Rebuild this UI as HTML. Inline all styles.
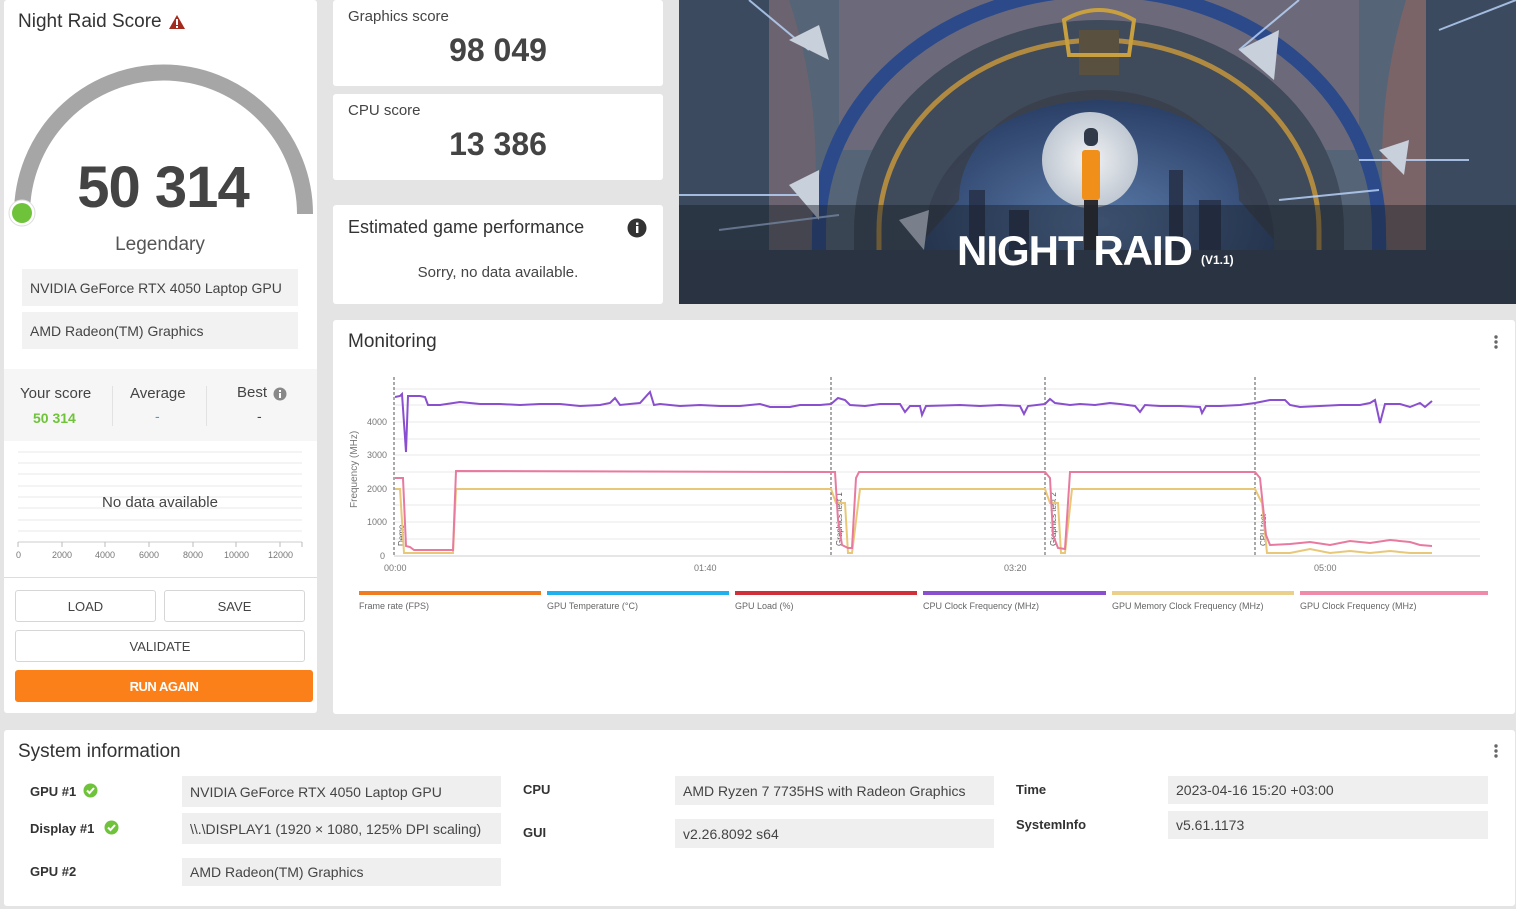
<!DOCTYPE html>
<html><head><meta charset="utf-8"><style>
*{margin:0;padding:0;box-sizing:border-box}
body{width:1516px;height:909px;background:#e4e4e4;font-family:"Liberation Sans",sans-serif;color:#3a3a3a;position:relative;overflow:hidden}
.card{position:absolute;background:#fff;border-radius:3px}
.abs{position:absolute}
.box{position:absolute;background:#f2f2f2;font-size:14px;color:#444;padding-left:8px;display:flex;align-items:center}
.btn{position:absolute;border:1px solid #d6d6d6;border-radius:3px;background:#fff;font-size:13px;color:#444;display:flex;align-items:center;justify-content:center}
.lbl{position:absolute;font-size:13px;font-weight:bold;color:#333}
.sv{position:absolute;background:#efefef;font-size:14px;color:#444;padding-left:8px;display:flex;align-items:center}
</style></head><body>

<!-- left card -->
<div class="card" style="left:4px;top:0;width:313px;height:713px"></div>
<div class="abs" style="left:18px;top:11px;font-size:19px;color:#333">Night Raid Score</div>
<svg class="abs" style="left:168px;top:14px" width="18" height="16"><path d="M9 1 L17 15 L1 15 Z" fill="#a52a1e"/><rect x="8" y="5" width="2" height="6" fill="#fff"/><rect x="8" y="12" width="2" height="2" fill="#fff"/></svg>
<svg class="abs" style="left:0;top:0" width="330" height="240">
<path d="M22 214 A141 141 0 0 1 305 214" fill="none" stroke="#a6a6a6" stroke-width="16"/>
<circle cx="22" cy="213" r="13" fill="#fff" stroke="#ddd"/>
<circle cx="22" cy="213" r="10" fill="#6fc33a"/>
</svg>
<div class="abs" style="left:0;width:326px;top:154px;text-align:center;font-size:58px;font-weight:bold;color:#444;letter-spacing:-1px">50 314</div>
<div class="abs" style="left:0;width:320px;top:234px;text-align:center;font-size:19px;color:#555">Legendary</div>
<div class="box" style="left:22px;top:269px;width:276px;height:37px">NVIDIA GeForce RTX 4050 Laptop GPU</div>
<div class="box" style="left:22px;top:312px;width:276px;height:37px">AMD Radeon(TM) Graphics</div>
<div class="abs" style="left:4px;top:369px;width:313px;height:72px;background:#f6f6f6"></div>
<div class="abs" style="left:20px;top:385px;font-size:15px;color:#444">Your score</div>
<div class="abs" style="left:33px;top:410px;font-size:14px;font-weight:bold;color:#6fc33a">50 314</div>
<div class="abs" style="left:112px;top:386px;width:1px;height:40px;background:#e2e2e2"></div>
<div class="abs" style="left:130px;top:385px;font-size:15px;color:#444">Average</div>
<div class="abs" style="left:155px;top:408px;font-size:14px;color:#29a8e0">-</div>
<div class="abs" style="left:206px;top:386px;width:1px;height:40px;background:#e2e2e2"></div>
<div class="abs" style="left:237px;top:384px;font-size:15px;color:#444">Best</div>
<svg class="abs" style="left:273px;top:387px" width="14" height="14"><circle cx="7" cy="7" r="6.5" fill="#888"/><rect x="6" y="6" width="2" height="5" fill="#fff"/><rect x="6" y="3" width="2" height="2" fill="#fff"/></svg>
<div class="abs" style="left:257px;top:408px;font-size:14px;color:#444">-</div>
<svg class="abs" style="left:0;top:440px" width="320" height="130" font-family="Liberation Sans" font-size="9" fill="#777">
<g stroke="#eaeaea"><line x1="18" y1="12" x2="302" y2="12"/><line x1="18" y1="23" x2="302" y2="23"/><line x1="18" y1="34" x2="302" y2="34"/><line x1="18" y1="46" x2="302" y2="46"/><line x1="18" y1="57" x2="302" y2="57"/><line x1="18" y1="68" x2="302" y2="68"/><line x1="18" y1="80" x2="302" y2="80"/><line x1="18" y1="91" x2="302" y2="91"/></g>
<line x1="18" y1="102" x2="302" y2="102" stroke="#ccc"/>
<g stroke="#bbb"><line x1="18" y1="102" x2="18" y2="107"/><line x1="62" y1="102" x2="62" y2="107"/><line x1="105" y1="102" x2="105" y2="107"/><line x1="149" y1="102" x2="149" y2="107"/><line x1="193" y1="102" x2="193" y2="107"/><line x1="236" y1="102" x2="236" y2="107"/><line x1="280" y1="102" x2="280" y2="107"/><line x1="302" y1="102" x2="302" y2="107"/></g>
<text x="16" y="118">0</text><text x="52" y="118">2000</text><text x="95" y="118">4000</text><text x="139" y="118">6000</text><text x="183" y="118">8000</text><text x="224" y="118">10000</text><text x="268" y="118">12000</text>
</svg>
<div class="abs" style="left:0;width:320px;top:494px;text-align:center;font-size:15px;color:#444">No data available</div>
<div class="abs" style="left:4px;top:577px;width:313px;height:1px;background:#ddd"></div>
<div class="btn" style="left:15px;top:590px;width:141px;height:32px">LOAD</div>
<div class="btn" style="left:164px;top:590px;width:141px;height:32px">SAVE</div>
<div class="btn" style="left:15px;top:630px;width:290px;height:32px">VALIDATE</div>
<div class="btn" style="left:15px;top:670px;width:298px;height:32px;background:#fb8019;border-color:#fb8019;color:#fff;font-weight:bold;letter-spacing:-0.5px">RUN AGAIN</div>

<!-- score cards -->
<div class="card" style="left:333px;top:0;width:330px;height:86px"></div>
<div class="abs" style="left:348px;top:8px;font-size:15px;color:#444">Graphics score</div>
<div class="abs" style="left:333px;width:330px;top:32px;text-align:center;font-size:32px;font-weight:bold;color:#444">98 049</div>
<div class="card" style="left:333px;top:94px;width:330px;height:86px"></div>
<div class="abs" style="left:348px;top:102px;font-size:15px;color:#444">CPU score</div>
<div class="abs" style="left:333px;width:330px;top:126px;text-align:center;font-size:32px;font-weight:bold;color:#444">13 386</div>
<div class="card" style="left:333px;top:205px;width:330px;height:99px"></div>
<div class="abs" style="left:348px;top:217px;font-size:18px;color:#333">Estimated game performance</div>
<svg class="abs" style="left:627px;top:218px" width="20" height="20"><circle cx="10" cy="10" r="9.5" fill="#333"/><rect x="9" y="8" width="2.4" height="7" fill="#fff"/><rect x="9" y="4.5" width="2.4" height="2.4" fill="#fff"/></svg>
<div class="abs" style="left:333px;width:330px;top:264px;text-align:center;font-size:15px;color:#444">Sorry, no data available.</div>

<!-- banner -->
<div class="abs" style="left:679px;top:0;width:837px;height:304px;overflow:hidden;background:#4a5a70">
<svg width="837" height="304" style="position:absolute;left:0;top:0">
 <defs>
  <radialGradient id="sky" cx="0.5" cy="0.6" r="0.6"><stop offset="0" stop-color="#5a7aa8"/><stop offset="1" stop-color="#2a3f66"/></radialGradient>
  <radialGradient id="moon"><stop offset="0" stop-color="#f0f2f4"/><stop offset="1" stop-color="#c0c8d2"/></radialGradient>
 </defs>
 <rect width="837" height="304" fill="#566477"/>
 <path d="M90 0 L90 304 L0 304 L0 0Z" fill="#3b4a5e"/>
 <path d="M747 0 L837 0 L837 304 L747 304Z" fill="#3b4a5e"/>
 <path d="M110 0 Q150 120 130 260 L90 260 L90 0Z" fill="#6b6470"/>
 <path d="M727 0 Q690 120 710 260 L747 260 L747 0Z" fill="#7a6468"/>
 <path d="M160 0 Q420 -40 680 0 L680 150 L160 150Z" fill="#6c6a7a"/>
 <path d="M140 304 L140 230 A280 240 0 0 1 700 230 L700 304Z" fill="none" stroke="#2c4a8a" stroke-width="14"/>
 <path d="M175 304 L175 230 A245 210 0 0 1 665 230 L665 304Z" fill="#3f4a5a"/>
 <path d="M200 304 L200 230 A220 190 0 0 1 640 230 L640 304Z" fill="none" stroke="#b08a40" stroke-width="5"/>
 <path d="M245 304 L245 240 A175 140 0 0 1 595 240 L595 304Z" fill="url(#sky)"/>
 <path d="M245 240 A175 140 0 0 1 595 240 L560 200 A140 110 0 0 0 280 200Z" fill="#3a3e48" opacity=".8"/>
 <rect x="400" y="30" width="40" height="45" fill="#5a5040"/>
 <path d="M385 20 Q420 0 455 20 L450 55 L390 55Z" fill="none" stroke="#c8a040" stroke-width="4"/>
 <circle cx="411" cy="160" r="48" fill="url(#moon)"/>
 <g fill="#2a3550"><rect x="290" y="190" width="16" height="110"/><rect x="330" y="210" width="20" height="90"/><rect x="490" y="170" width="14" height="130"/><rect x="520" y="200" width="22" height="100"/></g>
 <rect x="403" y="150" width="18" height="50" rx="3" fill="#f0901a"/>
 <rect x="405" y="128" width="14" height="18" rx="6" fill="#303a48"/>
 <rect x="405" y="200" width="14" height="70" fill="#2a2a30"/>
 <rect x="0" y="250" width="837" height="54" fill="#3a4456"/>
 <g stroke="#bcd8ff" stroke-width="2" opacity=".8"><line x1="70" y1="0" x2="130" y2="50"/><line x1="620" y1="0" x2="560" y2="50"/><line x1="0" y1="195" x2="120" y2="195"/><line x1="40" y1="230" x2="160" y2="215"/><line x1="680" y1="160" x2="790" y2="160"/><line x1="760" y1="30" x2="837" y2="0"/><line x1="600" y1="200" x2="700" y2="190"/></g>
 <g fill="#c8d0dc"><path d="M110 40 L140 25 L150 60Z"/><path d="M560 50 L600 30 L595 80Z"/><path d="M110 185 L140 170 L140 220Z"/><path d="M700 150 L730 140 L725 175Z"/><path d="M220 220 L250 210 L245 250Z"/></g>
 <rect x="0" y="205" width="837" height="99" fill="rgba(25,30,40,.45)"/>
</svg>
 <div class="abs" style="left:278px;top:227px;font-size:42px;font-weight:bold;color:#fff;letter-spacing:-1px">NIGHT RAID</div>
 <div class="abs" style="left:522px;top:253px;font-size:12px;font-weight:bold;color:#fff">(V1.1)</div>
</div>

<!-- monitoring -->
<div class="card" style="left:333px;top:320px;width:1182px;height:394px"></div>
<div class="abs" style="left:348px;top:331px;font-size:19px;color:#333">Monitoring</div>
<svg class="abs" style="left:1492px;top:334px" width="8" height="16"><circle cx="4" cy="3" r="1.7" fill="#666"/><circle cx="4" cy="8" r="1.7" fill="#666"/><circle cx="4" cy="13" r="1.7" fill="#666"/></svg>
<svg class="abs" style="left:0;top:0" width="1516" height="640" font-family="Liberation Sans" font-size="9" fill="#777">
<g stroke="#eaeaea"><line x1="394" y1="389" x2="1480" y2="389"/><line x1="394" y1="405" x2="1480" y2="405"/><line x1="394" y1="422" x2="1480" y2="422"/><line x1="394" y1="439" x2="1480" y2="439"/><line x1="394" y1="455" x2="1480" y2="455"/><line x1="394" y1="472" x2="1480" y2="472"/><line x1="394" y1="489" x2="1480" y2="489"/><line x1="394" y1="505" x2="1480" y2="505"/><line x1="394" y1="522" x2="1480" y2="522"/><line x1="394" y1="539" x2="1480" y2="539"/></g>
<line x1="394" y1="556" x2="1480" y2="556" stroke="#ccc"/>
<text x="367" y="425">4000</text><text x="367" y="458">3000</text><text x="367" y="492">2000</text><text x="367" y="525">1000</text><text x="380" y="559">0</text>
<text x="357" y="508" transform="rotate(-90 357 508)" font-size="10">Frequency (MHz)</text>
<text x="384" y="571">00:00</text><text x="694" y="571">01:40</text><text x="1004" y="571">03:20</text><text x="1314" y="571">05:00</text>
<g stroke="#555" stroke-dasharray="3,2"><line x1="394" y1="377" x2="394" y2="556"/><line x1="831" y1="377" x2="831" y2="556"/><line x1="1045" y1="377" x2="1045" y2="556"/><line x1="1255" y1="377" x2="1255" y2="556"/></g>
<g font-size="8" fill="#555"><text transform="translate(404,546) rotate(-90)">Demo</text><text transform="translate(842,546) rotate(-90)">Graphics test 1</text><text transform="translate(1056,546) rotate(-90)">Graphics test 2</text><text transform="translate(1266,546) rotate(-90)">CPU test</text></g>
<polyline fill="none" stroke="#e8c878" stroke-width="2" points="395,489 400,489 404,553 453,553 456,489 831,489 836,503 845,503 848,553 852,553 860,489 1045,489 1050,503 1058,503 1061,553 1065,553 1072,489 1255,489 1262,503 1267,553 1290,553 1310,549 1330,553 1350,551 1370,553 1390,551 1410,553 1432,553"/>
<polyline fill="none" stroke="#e87aa0" stroke-width="2" points="395,478 403,478 406,546 410,547 414,550 453,550 456,471 831,472 835,472 838,520 842,545 848,548 852,548 856,478 859,472 1045,472 1050,478 1053,535 1058,548 1065,549 1070,472 1255,472 1260,478 1266,535 1270,545 1290,544 1310,542 1330,545 1350,541 1370,543 1390,540 1410,542 1420,545 1432,546"/>
<polyline fill="none" stroke="#8a4fcf" stroke-width="2" points="395,397 400,396 402,394 406,452 408,396 420,396 425,397 428,405 440,405 460,402 480,404 500,404 520,405 540,404 560,404 580,406 600,405 610,403 615,398 620,405 640,403 650,392 654,405 660,404 680,406 700,405 720,406 740,406 760,404 770,407 790,407 800,405 820,405 831,404 838,398 845,400 850,405 865,406 880,404 900,404 905,412 910,406 920,406 922,415 926,406 960,405 980,406 1000,405 1020,406 1024,414 1028,406 1045,404 1050,399 1055,403 1070,405 1080,404 1095,405 1110,403 1120,404 1135,406 1140,412 1145,405 1160,406 1180,406 1200,407 1202,413 1206,406 1220,406 1240,405 1255,403 1270,400 1285,400 1290,405 1300,407 1320,406 1340,405 1360,405 1370,403 1375,400 1380,423 1385,404 1400,404 1410,407 1420,403 1425,407 1432,401"/>
<g stroke-width="4"><line x1="359" y1="593" x2="541" y2="593" stroke="#f07c22"/><line x1="547" y1="593" x2="729" y2="593" stroke="#1fb0ee"/><line x1="735" y1="593" x2="917" y2="593" stroke="#d0303a"/><line x1="923" y1="593" x2="1106" y2="593" stroke="#8a4fcf"/><line x1="1112" y1="593" x2="1294" y2="593" stroke="#ead08a"/><line x1="1300" y1="593" x2="1488" y2="593" stroke="#ef8aa8"/></g>
<g font-size="9" fill="#666"><text x="359" y="609">Frame rate (FPS)</text><text x="547" y="609">GPU Temperature (°C)</text><text x="735" y="609">GPU Load (%)</text><text x="923" y="609">CPU Clock Frequency (MHz)</text><text x="1112" y="609">GPU Memory Clock Frequency (MHz)</text><text x="1300" y="609">GPU Clock Frequency (MHz)</text></g>
</svg>

<!-- system info -->
<div class="card" style="left:4px;top:730px;width:1511px;height:176px"></div>
<div class="abs" style="left:18px;top:741px;font-size:19px;color:#333">System information</div>
<svg class="abs" style="left:1492px;top:743px" width="8" height="16"><circle cx="4" cy="3" r="1.7" fill="#666"/><circle cx="4" cy="8" r="1.7" fill="#666"/><circle cx="4" cy="13" r="1.7" fill="#666"/></svg>
<div class="lbl" style="left:30px;top:784px">GPU #1</div>
<svg class="abs" style="left:83px;top:783px" width="15" height="15"><circle cx="7.5" cy="7.5" r="7" fill="#6fc33a"/><path d="M4 7.5 L6.5 10 L11 5" stroke="#fff" stroke-width="2" fill="none"/></svg>
<div class="lbl" style="left:30px;top:821px">Display #1</div>
<svg class="abs" style="left:104px;top:820px" width="15" height="15"><circle cx="7.5" cy="7.5" r="7" fill="#6fc33a"/><path d="M4 7.5 L6.5 10 L11 5" stroke="#fff" stroke-width="2" fill="none"/></svg>
<div class="lbl" style="left:30px;top:864px">GPU #2</div>
<div class="sv" style="left:182px;top:776px;width:319px;height:31px">NVIDIA GeForce RTX 4050 Laptop GPU</div>
<div class="sv" style="left:182px;top:813px;width:319px;height:31px">\\.\DISPLAY1 (1920 × 1080, 125% DPI scaling)</div>
<div class="sv" style="left:182px;top:858px;width:319px;height:28px">AMD Radeon(TM) Graphics</div>
<div class="lbl" style="left:523px;top:782px">CPU</div>
<div class="lbl" style="left:523px;top:825px">GUI</div>
<div class="sv" style="left:675px;top:776px;width:319px;height:29px">AMD Ryzen 7 7735HS with Radeon Graphics</div>
<div class="sv" style="left:675px;top:819px;width:319px;height:29px">v2.26.8092 s64</div>
<div class="lbl" style="left:1016px;top:782px">Time</div>
<div class="lbl" style="left:1016px;top:817px">SystemInfo</div>
<div class="sv" style="left:1168px;top:776px;width:320px;height:28px">2023-04-16 15:20 +03:00</div>
<div class="sv" style="left:1168px;top:811px;width:320px;height:28px">v5.61.1173</div>
</body></html>
